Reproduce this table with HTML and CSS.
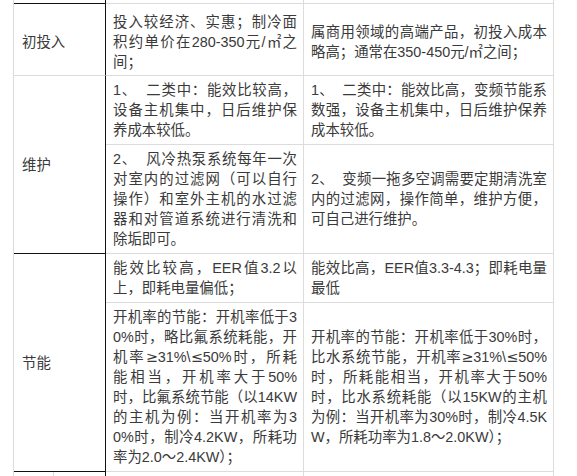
FILE: index.html
```html
<!DOCTYPE html>
<html lang="zh-CN">
<head>
<meta charset="utf-8">
<title>对比表</title>
<link rel="stylesheet" href="styles.css">
</head>
<body>
<table class="cmp">
  <colgroup>
    <col class="c1a"><col class="c1b"><col class="c2"><col class="c3">
  </colgroup>
  <tr class="r-cut">
    <td colspan="2" class="lbl"></td><td></td><td></td>
  </tr>
  <tr class="r-first">
    <td colspan="2" class="lbl">初投入</td>
    <td>投入较经济、实惠；制冷面积约单价在280-350元/㎡之间；</td>
    <td>属商用领域的高端产品，初投入成本略高；通常在350-450元/㎡之间；</td>
  </tr>
  <tr>
    <td colspan="2" rowspan="2" class="lbl lbl-end">维护</td>
    <td>1、&nbsp;&nbsp;二类中：能效比较高，设备主机集中，日后维护保养成本较低。</td>
    <td>1、&nbsp;&nbsp;二类中：能效比高，变频节能系数强，设备主机集中，日后维护保养成本较低。</td>
  </tr>
  <tr>
    <td>2、&nbsp;&nbsp;风冷热泵系统每年一次对室内的过滤网（可以自行操作）和室外主机的水过滤器和对管道系统进行清洗和除垢即可。</td>
    <td>2、&nbsp;&nbsp;变频一拖多空调需要定期清洗室内的过滤网，操作简单，维护方便，可自己进行维护。</td>
  </tr>
  <tr>
    <td colspan="2" rowspan="2" class="lbl lbl-end">节能</td>
    <td>能效比较高，EER值3.2以上，即耗电量偏低；</td>
    <td>能效比高，EER值3.3-4.3；即耗电量最低</td>
  </tr>
  <tr>
    <td>开机率的节能：开机率低于30%时，略比氟系统耗能，开机率<span class="sym">≥</span>31%\<span class="sym">≤</span>50%时，所耗能相当，开机率大于50%时，比氟系统节能（以14KW的主机为例：当开机率为30%时，制冷4.2KW，所耗功率为2.0～2.4KW）；</td>
    <td>开机率的节能：开机率低于30%时，比水系统节能，开机率<span class="sym">≥</span>31%\<span class="sym">≤</span>50%时，所耗能相当，开机率大于50%时，比水系统耗能（以15KW的主机为例：当开机率为30%时，制冷4.5KW，所耗功率为1.8～2.0KW）；</td>
  </tr>
  <tr class="r-next">
    <td></td><td class="lbl"></td><td></td><td></td>
  </tr>
</table>
</body>
</html>
```
FILE: styles.css
```css
html, body {
  margin: 0;
  padding: 0;
  background: #ffffff;
  overflow: hidden;
}

.cmp {
  margin-left: 13px;
  border-collapse: separate;
  border-spacing: 0;
  table-layout: fixed;
  width: 541px;
  border-left: 1px solid #dcdcdc;
  font-family: "Liberation Sans", "Noto Sans CJK SC", sans-serif;
  font-size: 14.4px;
  line-height: 20px;
  color: #3a3a3a;
}

.c1a { width: 40px; }
.c1b { width: 52px; }
.c2 { width: 198px; }
.c3 { width: 250px; }

.cmp td {
  border-right: 1px solid #dcdcdc;
  border-bottom: 1px solid #dcdcdc;
  padding: 4px 6px 4px 7px;
  vertical-align: middle;
  text-align: justify;
  word-break: break-all;
}

.sym {
  font-family: "DejaVu Sans", sans-serif;
}

.cmp td.lbl {
  border-right: 1px solid #111111;
  padding-left: 8px;
  text-align: left;
}

.cmp td.lbl-end {
  border-bottom: 1px solid #111111;
}

.r-cut td {
  height: 3px;
  padding: 0;
  line-height: 0;
}

.r-cut td.lbl {
  border-bottom: 1px solid #111111;
}

.r-first td {
  height: 60px;
  padding-top: 8px;
  padding-bottom: 3px;
}

.r-next td {
  height: 20px;
}
```
